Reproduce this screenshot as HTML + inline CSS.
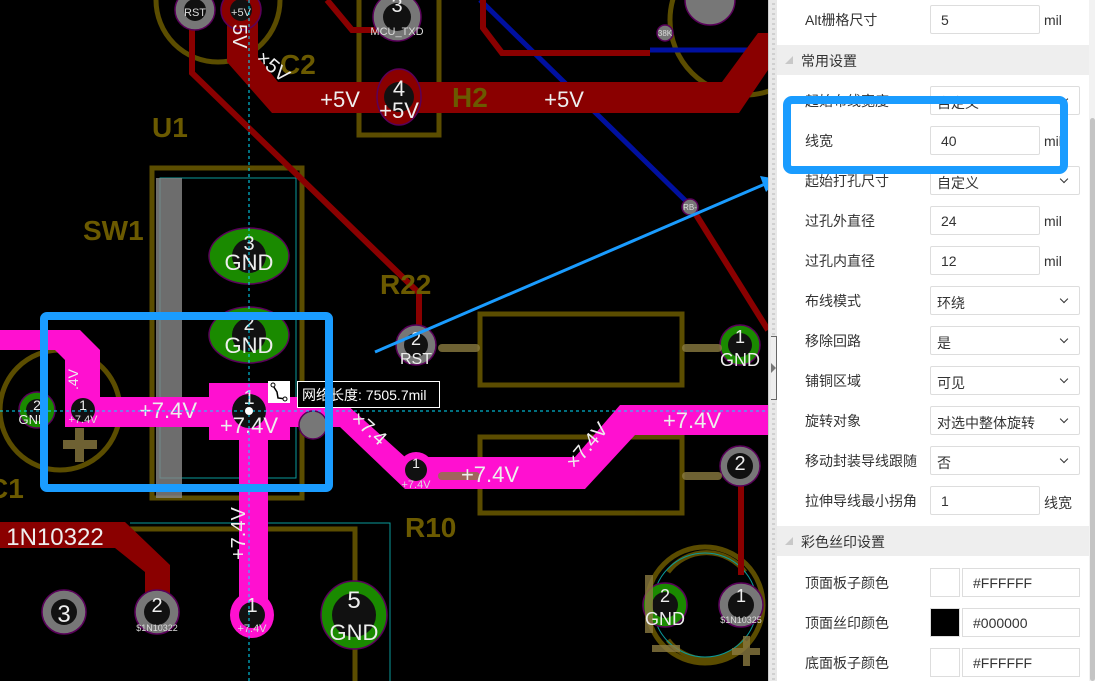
<!DOCTYPE html>
<html><head><meta charset="utf-8"><style>
*{margin:0;padding:0;box-sizing:border-box}
body{width:1095px;height:681px;overflow:hidden;background:#000;position:relative;font-family:"Liberation Sans","Noto Sans CJK SC",sans-serif}
#pcb{position:absolute;left:0;top:0}
#div{position:absolute;left:768px;top:0;width:9px;height:681px;background:#e8e8e8;border-left:1px solid #ccc;
background-image:repeating-linear-gradient(#e8e8e8 0 3px,#d0d0d0 3px 5px);background-size:3px 100%;background-repeat:no-repeat;background-position:3px 0}
#handle{position:absolute;left:771px;top:336px;width:6px;height:64px;border:1px solid #666;border-left:none;background:#eee}
#handle:after{content:"";position:absolute;left:0;top:26px;border-left:5px solid #777;border-top:5px solid transparent;border-bottom:5px solid transparent}
#panel{position:absolute;left:777px;top:0;width:312px;height:681px;background:#fff;font-size:14px;color:#333}
#sb{position:absolute;left:1089px;top:0;width:6px;height:681px;background:#f2f2f2}
#sb i{position:absolute;left:1px;top:118px;width:5px;height:563px;background:#c4c4c4;border-radius:3px}
.row{position:absolute;left:0;width:312px;height:30px}
.lab{position:absolute;left:28px;top:5px;white-space:nowrap}
.in{position:absolute;left:153px;top:0;width:110px;height:29px;border:1px solid #ddd;border-radius:2px;padding:6px 0 0 10px;font-size:14px}
.sel{position:absolute;left:153px;top:0;width:150px;height:29px;border:1px solid #ddd;border-radius:2px;padding:6px 0 0 6px}
.sel:after{content:"";position:absolute;right:12px;top:9px;width:5px;height:5px;border-right:1.5px solid #333;border-bottom:1.5px solid #333;transform:rotate(45deg)}
.u{position:absolute;left:267px;top:7px}
.hd{position:absolute;left:0;width:312px;height:30px;background:#eee}
.hd span{position:absolute;left:24px;top:6px}
.hd:before{content:"";position:absolute;left:8px;top:11px;border-right:8px solid #c8c8c8;border-top:8px solid transparent}
.sw{position:absolute;left:153px;top:0;width:30px;height:29px;border:1px solid #ddd}
.hx{position:absolute;left:185px;top:0;width:118px;height:29px;border:1px solid #ddd;padding:6px 0 0 10px}
</style></head><body>
<svg id="pcb" width="768" height="681" viewBox="0 0 768 681" font-family="Liberation Sans, sans-serif">
<rect width="768" height="681" fill="#000"/>
<g fill="none" stroke="#6b5a00" stroke-width="5" opacity="0.85">
<path d="M156 0 A62 62 0 0 0 280 0"/>
<rect x="359" y="-5" width="80" height="140"/>
<circle cx="745" cy="20" r="75"/>
<rect x="152" y="168" width="150" height="330"/>
<rect x="480" y="314" width="202" height="71"/>
<rect x="480" y="437" width="202" height="76"/>
<circle cx="60" cy="410" r="60"/>
<path d="M130 529 H355 V681"/>
<circle cx="705" cy="605" r="58"/>
<path d="M668 572 A48 48 0 0 1 745 572"/>
<path d="M668 640 A48 48 0 0 0 745 640"/>
</g>
<g fill="none" stroke="#0a9a9a" stroke-width="1">
<rect x="160" y="178" width="136" height="300"/>
<path d="M130 523 H390 V681"/>
<circle cx="705" cy="605" r="52"/>
</g>
<rect x="156" y="178" width="26" height="320" fill="#888" opacity="0.8"/>
<path d="M480 0 L690 205 M650 50 H768" stroke="#0010a0" stroke-width="5" fill="none"/>
<g stroke="#8a0000" stroke-width="6" fill="none">
<path d="M192 20 V73 L419 293 V333"/>
<path d="M327 0 L352 30 H378"/>
<path d="M483 0 V28 L502 53 H650"/>
<path d="M690 205 L768 330"/>
<path d="M741 480 V575"/>
</g>
<path d="M227 0 H258 V57 L278 82 H722 L758 33 H768 V70 L739 113 H272 L227 62 Z" fill="#8a0000"/>
<path d="M0 522 H125 L170 565 V600 H145 V572 L115 548 H0 Z" fill="#8a0000"/>
<g fill="#ff10d0">
<path d="M0 330 H80 L100 350 V397 H340 L345 403 L405 457 H575 L620 405 H768 V435 H635 L585 489 H405 L340 427 H268 V617 H239 V427 H65 V360 L55 350 H0 Z"/>
<rect x="209" y="383" width="81" height="57"/>
<ellipse cx="252" cy="615" rx="22" ry="23"/>
<circle cx="416" cy="470" r="18"/>
<circle cx="83" cy="410" r="17"/>
</g>
<g stroke="#5a005a" stroke-width="1.5">
<circle cx="195" cy="10" r="20" fill="#777"/>
<circle cx="241" cy="10" r="20" fill="#8a0000"/>
<circle cx="397" cy="17" r="24" fill="#777"/>
<ellipse cx="399" cy="97" rx="22" ry="28" fill="#8a0000"/>
<ellipse cx="249" cy="256" rx="40" ry="28" fill="#1a8a00"/>
<ellipse cx="249" cy="335" rx="40" ry="28" fill="#1a8a00"/>
<circle cx="416" cy="345" r="20" fill="#777"/>
<circle cx="740" cy="345" r="20" fill="#1a8a00"/>
<circle cx="740" cy="466" r="20" fill="#777"/>
<circle cx="37" cy="410" r="18" fill="#1a8a00"/>
<circle cx="64" cy="612" r="22" fill="#777"/>
<circle cx="157" cy="612" r="22" fill="#777"/>
<ellipse cx="354" cy="615" rx="33" ry="34" fill="#1a8a00"/>
<circle cx="665" cy="605" r="22" fill="#1a8a00"/>
<circle cx="741" cy="605" r="22" fill="#777"/>
<circle cx="710" cy="0" r="25" fill="#777"/>
<circle cx="665" cy="33" r="8" fill="#777"/>
<circle cx="690" cy="207" r="8" fill="#777"/>
<circle cx="313" cy="425" r="14" fill="#777"/>
</g>
<g fill="#111">
<circle cx="195" cy="10" r="11"/><circle cx="241" cy="10" r="11"/><circle cx="397" cy="17" r="14"/><circle cx="399" cy="97" r="15"/>
<circle cx="249" cy="256" r="17"/><circle cx="249" cy="335" r="17"/><circle cx="416" cy="345" r="12"/><circle cx="740" cy="345" r="12"/><circle cx="740" cy="466" r="13"/>
<circle cx="37" cy="410" r="11"/><circle cx="83" cy="410" r="12"/><circle cx="249" cy="411" r="17"/><circle cx="416" cy="470" r="11"/>
<circle cx="64" cy="612" r="13"/><circle cx="157" cy="612" r="13"/><circle cx="252" cy="615" r="13"/><circle cx="354" cy="615" r="22"/><circle cx="665" cy="605" r="13"/><circle cx="741" cy="605" r="13"/>
</g>
<g fill="#8a7a40" opacity="0.8">
<rect x="63" y="440" width="34" height="9"/><rect x="75" y="428" width="9" height="34"/>
<rect x="732" y="648" width="28" height="7"/><rect x="743" y="636" width="7" height="30"/>
<rect x="652" y="645" width="28" height="7"/><rect x="645" y="575" width="8" height="58"/>
<rect x="438" y="344" width="42" height="8" rx="4"/><rect x="682" y="344" width="40" height="8" rx="4"/>
<rect x="438" y="472" width="42" height="8" rx="4"/><rect x="682" y="472" width="40" height="8" rx="4"/>
</g>
<g fill="#6b5a00" font-weight="bold" font-size="28">
<text x="280" y="74">C2</text><text x="452" y="107">H2</text><text x="152" y="137">U1</text>
<text x="83" y="240">SW1</text><text x="380" y="294">R22</text><text x="405" y="537">R10</text><text x="-12" y="498">C1</text>
</g>
<g fill="#eee" font-size="22" text-anchor="middle">
<text x="340" y="107">+5V</text><text x="564" y="107">+5V</text><text x="399" y="118">+5V</text>
<text x="168" y="418">+7.4V</text><text x="249" y="433">+7.4V</text><text x="490" y="482">+7.4V</text><text x="692" y="428">+7.4V</text>
<text x="249" y="270">GND</text><text x="249" y="353">GND</text><text x="354" y="640">GND</text><text x="665" y="625" font-size="18">GND</text><text x="740" y="366" font-size="18">GND</text>
<text x="55" y="545" font-size="24">1N10322</text>
<text x="249" y="250" font-size="20">3</text><text x="249" y="330" font-size="20">2</text><text x="249" y="404" font-size="20">1</text>
<text x="397" y="12" font-size="20">3</text><text x="399" y="96" font-size="22">4</text>
<text x="416" y="345" font-size="18">2</text><text x="416" y="364" font-size="16">RST</text>
<text x="740" y="343" font-size="18">1</text><text x="740" y="470" font-size="20">2</text>
<text x="64" y="622" font-size="24">3</text><text x="157" y="612" font-size="20">2</text><text x="252" y="612" font-size="20">1</text><text x="354" y="608" font-size="24">5</text>
<text x="665" y="602" font-size="18">2</text><text x="741" y="602" font-size="18">1</text>
<text x="37" y="410" font-size="14">2</text><text x="33" y="424" font-size="13">GND</text><text x="83" y="410" font-size="14">1</text>
<text x="416" y="468" font-size="14">1</text>
</g>
<g fill="#ddd" font-size="11" text-anchor="middle">
<text x="195" y="16">RST</text><text x="241" y="16">+5V</text><text x="397" y="35">MCU_TXD</text>
<text x="83" y="423">+7.4V</text><text x="416" y="488">+7.4V</text><text x="252" y="632">+7.4V</text><text x="157" y="631" font-size="9">$1N10322</text><text x="741" y="623" font-size="9">$1N10325</text>
<text x="665" y="36" font-size="8">38K</text><text x="690" y="210" font-size="8">RB-</text>
</g>
<g fill="#eee" font-size="20">
<text transform="translate(233,24) rotate(90)">5V</text>
<text transform="translate(255,60) rotate(40)">×5V</text>
<text transform="translate(350,420) rotate(42)">×7.4</text>
<text transform="translate(575,470) rotate(-50)">×7.4V</text>
<text transform="translate(245,560) rotate(-90)">+7.4V</text>
<text transform="translate(78,390) rotate(-90)" font-size="14">.4V</text>
</g>
<g stroke="#00e0ff" stroke-width="1" stroke-dasharray="3,3">
<line x1="249" y1="0" x2="249" y2="681"/><line x1="0" y1="411" x2="768" y2="411"/>
</g>
<circle cx="249" cy="411" r="4" fill="#fff"/>
<rect x="268" y="381" width="22" height="22" fill="#fff"/>
<path d="M272 384 L277 392 L278 398 L286 399" stroke="#000" stroke-width="1.5" fill="none"/>
<circle cx="273" cy="385" r="2" fill="#fff" stroke="#000"/><circle cx="285" cy="399" r="2" fill="#fff" stroke="#000"/>
<rect x="297.5" y="381.5" width="142" height="26" fill="#000" stroke="#fff"/>
<text x="302" y="400" fill="#fff" font-size="14" font-family="Liberation Sans, Noto Sans CJK SC, sans-serif">网络长度: 7505.7mil</text>
<rect x="44" y="316" width="285" height="172" rx="3" fill="none" stroke="#1a9cff" stroke-width="8"/>
<line x1="375" y1="352" x2="765" y2="184" stroke="#1a9cff" stroke-width="3"/>
<path d="M778 179 L760 176 L766 192 Z" fill="#1a9cff"/>
</svg>
<div id="div"></div><div id="handle"></div>
<div id="panel">
<div class="row" style="top:5px"><span class="lab">Alt栅格尺寸</span><div class="in">5</div><span class="u">mil</span></div>
<div class="hd" style="top:45px"><span>常用设置</span></div>
<div class="row" style="top:86px"><span class="lab">起始布线宽度</span><div class="sel">自定义</div></div>
<div class="row" style="top:126px"><span class="lab">线宽</span><div class="in">40</div><span class="u">mil</span></div>
<div class="row" style="top:166px"><span class="lab">起始打孔尺寸</span><div class="sel">自定义</div></div>
<div class="row" style="top:206px"><span class="lab">过孔外直径</span><div class="in">24</div><span class="u">mil</span></div>
<div class="row" style="top:246px"><span class="lab">过孔内直径</span><div class="in">12</div><span class="u">mil</span></div>
<div class="row" style="top:286px"><span class="lab">布线模式</span><div class="sel">环绕</div></div>
<div class="row" style="top:326px"><span class="lab">移除回路</span><div class="sel">是</div></div>
<div class="row" style="top:366px"><span class="lab">铺铜区域</span><div class="sel">可见</div></div>
<div class="row" style="top:406px"><span class="lab">旋转对象</span><div class="sel">对选中整体旋转</div></div>
<div class="row" style="top:446px"><span class="lab">移动封装导线跟随</span><div class="sel">否</div></div>
<div class="row" style="top:486px"><span class="lab">拉伸导线最小拐角</span><div class="in">1</div><span class="u">线宽</span></div>
<div class="hd" style="top:526px"><span>彩色丝印设置</span></div>
<div class="row" style="top:568px"><span class="lab">顶面板子颜色</span><div class="sw"></div><div class="hx">#FFFFFF</div></div>
<div class="row" style="top:608px"><span class="lab">顶面丝印颜色</span><div class="sw" style="background:#000"></div><div class="hx">#000000</div></div>
<div class="row" style="top:648px"><span class="lab">底面板子颜色</span><div class="sw"></div><div class="hx">#FFFFFF</div></div>
</div>
<div id="sb"><i></i></div>
<svg style="position:absolute;left:0;top:0" width="1095" height="681"><rect x="787" y="100" width="277" height="70" rx="5" fill="none" stroke="#1a9cff" stroke-width="8"/></svg>
</body></html>
